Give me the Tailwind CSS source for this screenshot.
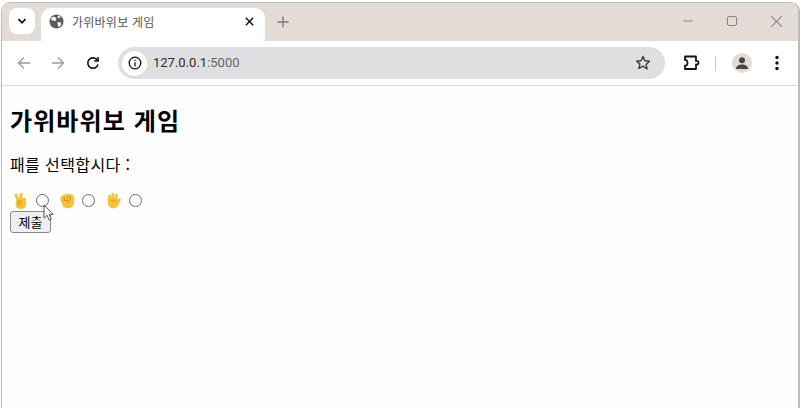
<!DOCTYPE html>
<html lang="ko">
<head>
<meta charset="utf-8">
<title>가위바위보 게임</title>
<script src="https://cdn.jsdelivr.net/npm/@tailwindcss/browser@4"></script>
</head>
<body class="w-[800px] h-[408px] overflow-hidden bg-white font-['Noto_Sans_CJK_KR','Noto_Sans',sans-serif]">
<div class="relative ml-[1px] mt-[2px] w-[799px] h-[406px] flex flex-col border-l border-r-2 border-t border-[#bcbcbc] rounded-t-[9px] overflow-hidden bg-[#fffeff]">
  <!-- tab strip -->
  <div class="h-[38px] shrink-0 flex items-start bg-[#e3dbd6] pt-[5px]">
    <button class="ml-[7px] w-[26px] h-[26px] rounded-[8px] bg-white flex items-center justify-center">
      <svg width="12" height="12" viewBox="0 0 12 12" fill="none" stroke="#111" stroke-width="1.8"><path d="M2.500 4.200 6 7.800l3.500-3.600"/></svg>
    </button>
    <div class="relative ml-[6px] w-[224px] h-[33px] bg-white rounded-t-[10px] flex items-center pl-[8px] pr-[10px] pb-[6px]">
      <svg width="15" height="15" viewBox="0 0 16 16" class="shrink-0"><circle cx="8" cy="8" r="7.500" fill="#5b5b5f"/><path d="M3 3.500 6 3l2 2-1 2.500L4.500 7 2 6zM9 8.500l3.500.5.500 2.500-2.500 2.500-1-2zM9.500 1.500l3 1.500-1.500 1.500-2-1z" fill="#fff"/></svg>
      <span class="ml-[8px] text-[12px] leading-[16px] text-[#555] tracking-[0.25px]">가위바위보 게임</span>
      <svg width="11" height="11" viewBox="0 0 12 12" class="ml-auto" fill="none" stroke="#111" stroke-width="1.600"><path d="M2 2l8 8M10 2l-8 8"/></svg>
    </div>
    <svg width="12" height="12" viewBox="0 0 12 12" class="ml-[12px] mt-[8px]" fill="none" stroke="#7c7674" stroke-width="1.300"><path d="M6 .5v11M.5 6h11"/></svg>
    <div class="ml-auto flex items-center h-[26px] mr-[16px] gap-[34px]">
      <svg width="10" height="10" viewBox="0 0 10 10" fill="none" stroke="#8a8481" stroke-width="1"><path d="M0 5h10"/></svg>
      <svg width="10" height="10" viewBox="0 0 10 10" fill="none" stroke="#8a8481" stroke-width="1"><rect x=".5" y=".5" width="9" height="9" rx="1.500"/></svg>
      <svg width="11" height="11" viewBox="0 0 10 10" fill="none" stroke="#8a8481" stroke-width="1"><path d="M0 0l10 10M10 0 0 10"/></svg>
    </div>
  </div>
  <!-- toolbar -->
  <div class="h-[45px] shrink-0 bg-white rounded-t-[8px] border-b border-[#dcdcdc] flex items-center pl-[14px] pr-[14px]">
    <svg width="16" height="16" viewBox="0 0 16 16" fill="none" stroke="#9a9a9c" stroke-width="1.300"><path d="M14 8H2.500M8 2.500 2.500 8 8 13.500"/></svg>
    <svg width="16" height="16" viewBox="0 0 16 16" class="ml-[18px]" fill="none" stroke="#9a9a9c" stroke-width="1.300"><path d="M2 8h11.500M8 2.500 13.500 8 8 13.500"/></svg>
    <svg width="16" height="16" viewBox="0 0 16 16" class="ml-[19px]" fill="none" stroke="#111" stroke-width="1.600"><path d="M13 9.500A5.200 5.200 0 1 1 11.500 4.200L13 5.700"/><path d="M13.200 2v4h-4" stroke-width="1.400"/></svg>
    <div class="ml-[17px] w-[547px] h-[32px] rounded-full bg-[#dfdfe1] flex items-center pl-[4px] pr-[14px]">
      <div class="w-[25px] h-[25px] rounded-full bg-white flex items-center justify-center">
        <svg width="14" height="14" viewBox="0 0 14 14" fill="none" stroke="#111" stroke-width="1.300"><circle cx="7" cy="7" r="5.800"/><path d="M7 6.200v4M7 3.700v1.300"/></svg>
      </div>
      <span class="ml-[6px] font-['Roboto'] text-[13px] leading-[20px] text-[#2b2b2b]">127.0.0.1<span class="text-[#666668]">:5000</span></span>
      <svg width="16" height="16" viewBox="0 0 16 16" class="ml-auto" fill="none" stroke="#3c3c3e" stroke-width="1.400" stroke-linejoin="round"><path d="M8 1.500l1.900 4.300 4.600.5-3.400 3.100 1 4.600L8 11.200l-4.100 2.300 1-4.600L1.500 6.300l4.600-.5z"/></svg>
    </div>
    <svg width="18" height="18" viewBox="0 0 18 18" class="ml-[17px]" fill="none" stroke="#111" stroke-width="1.800" stroke-linejoin="round"><path d="M3 2.500h11v4.500c1.500-.5 2.500.5 2.500 1.700s-1 2.200-2.500 1.700v4.600H3v-3.500c1.500.5 2.500-.5 2.500-2.500S4.500 5.500 3 6z"/></svg>
    <div class="ml-[15px] w-px h-[15px] bg-[#c9c9cb]"></div>
    <div class="ml-[16px] w-[20px] h-[20px] rounded-full bg-[#e3dbd6] flex items-center justify-center overflow-hidden">
      <svg width="14" height="14" viewBox="0 0 14 14" fill="#4a4442"><circle cx="7" cy="4.300" r="3"/><path d="M1 13c0-3 2.500-4.500 6-4.500s6 1.500 6 4.500z"/></svg>
    </div>
    <svg width="4" height="16" viewBox="0 0 4 16" class="ml-[23px]" fill="#111"><circle cx="2" cy="2.500" r="1.700"/><circle cx="2" cy="8" r="1.700"/><circle cx="2" cy="13.500" r="1.700"/></svg>
  </div>
  <!-- page -->
  <main class="relative flex-1 pl-[8px] text-black">
    <h1 class="mt-[18px] text-[24px] leading-[32px] font-bold tracking-[1.1px]">가위바위보 게임</h1>
    <p class="mt-[16px] text-[16px] leading-[24px] tracking-[0.4px]">패를 선택합시다 :</p>
    <form class="mt-[14px]">
      <div class="flex items-center h-[21px] pl-[2px]">
        <svg width="16" height="17" viewBox="0 0 16 17" aria-label="✌"><path d="M2 2.500 4.500 1.200 6.800 6 8.300.7l2.700.8-1 4.800 2.400-1 1.600 1.500.3 5.700c-.3 3-2.800 4.500-5.500 4.500-3.200 0-5.300-1.700-5.300-4.500 0-1.500.5-2.700 1.500-3.500z" fill="#f6c338"/><path d="M4.500 9.500c1.800-.8 4-.8 5.500.2-1 .8-1.500 1.500-1.500 2.800M5 12c1-.5 2-.5 3 0" stroke="#d98e1e" fill="none"/></svg>
        <span class="ml-[8px] w-[13px] h-[13px] rounded-full border border-[#6a6a6a] bg-white"></span>
        <svg width="16" height="17" viewBox="0 0 16 17" class="ml-[10px]" aria-label="✊"><path d="M1 6C2.500 3 8 1.200 11.500 2c2.800.6 3.800 2.300 3.800 4.500l-.5 5c-.3 3-2.800 4.800-6 4.800-3.200 0-5.300-1.600-5.600-4.300z" fill="#f6c338"/><path d="M5 4.500 5.500 8M8.500 4v4M11.500 4v4M3.500 9.500c2-1.200 5-1 7-.5-1 .8-1.500 1.700-1.500 2.800" stroke="#d98e1e" fill="none"/></svg>
        <span class="ml-[7px] w-[13px] h-[13px] rounded-full border border-[#6a6a6a] bg-white"></span>
        <svg width="16" height="17" viewBox="0 0 16 17" class="ml-[11px]" aria-label="✋"><path d="M2 8V3.500L4.500 2.800 5.500 6.500V1.300L8 .8 8.700 6l1-4.200 2.300.7-.7 5 2-1.500 1.700 1.300-2.700 6.200C10.800 15.800 9.200 16.400 7.500 16.400 4.300 16.400 2 14.200 2 11z" fill="#f6c338"/><path d="M5 9.500c1.500-.7 3.500-.7 5 0" stroke="#d98e1e" fill="none"/></svg>
        <span class="ml-[7px] w-[13px] h-[13px] rounded-full border border-[#6a6a6a] bg-white"></span>
      </div>
      <button type="button" class="block w-[41px] h-[22px] bg-[#efefef] border border-[#8a8a8a] rounded-[3px] text-[13px] leading-[18px] text-black">제출</button>
    </form>
    <svg width="12" height="18" viewBox="0 0 12 18" class="absolute left-[41px] top-[118px]"><path d="M1 1v13l3-2.800 2.200 5 2.200-1-2.200-4.800h4z" fill="#fff" stroke="#555" stroke-width="1"/></svg>
  </main>
</div>
</body>
</html>
